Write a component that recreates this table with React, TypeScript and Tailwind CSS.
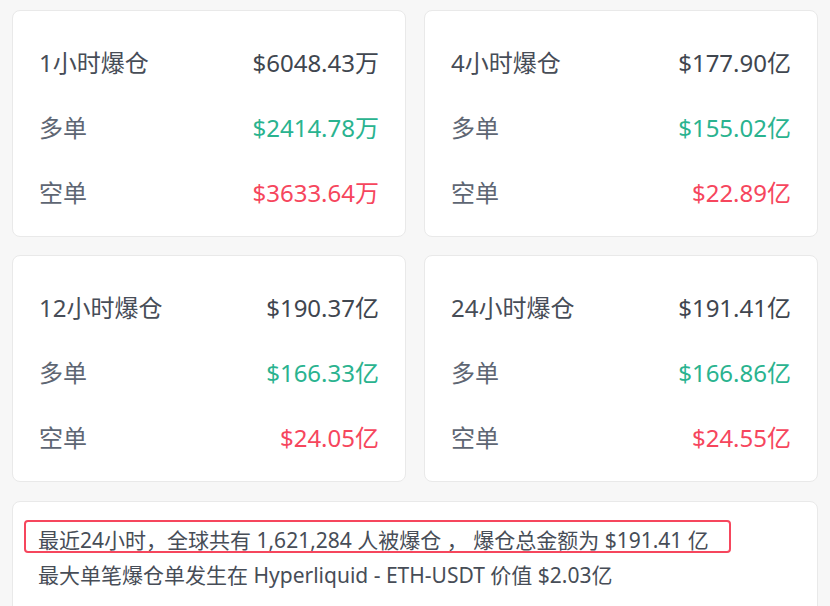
import React from 'react';

const cards = [
  {
    title: '1小时爆仓',
    total: '$6048.43万',
    long: '$2414.78万',
    short: '$3633.64万'
  },
  {
    title: '4小时爆仓',
    total: '$177.90亿',
    long: '$155.02亿',
    short: '$22.89亿'
  },
  {
    title: '12小时爆仓',
    total: '$190.37亿',
    long: '$166.33亿',
    short: '$24.05亿'
  },
  {
    title: '24小时爆仓',
    total: '$191.41亿',
    long: '$166.86亿',
    short: '$24.55亿'
  }
];

const App = () => {
  return (
    <div
      className="min-h-[606px] bg-[#f7f7f7] px-[12px] pt-[10px] overflow-hidden"
      style={{ fontFamily: '"Noto Sans", "Noto Sans CJK SC", sans-serif' }}
    >
      {/* Liquidation cards */}
      <div className="grid grid-cols-2 gap-[18px]">
        {cards.map((card, index) => (
          <div
            key={index}
            className="h-[227px] bg-white rounded-[8px] border border-[#e9e9e9] px-[26px] pt-[19px]"
          >
            <div className="h-[65px] flex items-center justify-between text-[24px]">
              <span className="text-[#474d57]">{card.title}</span>
              <span className="text-[#40464f]">{card.total}</span>
            </div>
            <div className="h-[65px] flex items-center justify-between text-[24px]">
              <span className="text-[#5e6673]">多单</span>
              <span className="text-[#2ab38f]">{card.long}</span>
            </div>
            <div className="h-[65px] flex items-center justify-between text-[24px]">
              <span className="text-[#5e6673]">空单</span>
              <span className="text-[#f6465d]">{card.short}</span>
            </div>
          </div>
        ))}
      </div>

      {/* Summary */}
      <div className="mt-[19px] h-[130px] bg-white rounded-[8px] border border-[#e9e9e9] pl-[11px] pt-[18px] text-[21px] text-[#474d57]">
        <div className="w-fit border-2 border-[#f6465d] rounded-[4px] pl-[12px] pr-[20px] pt-[7px] leading-[22px] whitespace-nowrap">
          最近24小时，全球共有 1,621,284 人被爆仓 ， 爆仓总金额为 $191.41 亿
        </div>
        <div className="mt-[7px] pl-[14px] leading-[30px] whitespace-nowrap">
          最大单笔爆仓单发生在 Hyperliquid - ETH-USDT 价值 $2.03亿
        </div>
      </div>
    </div>
  );
};

export default App;
